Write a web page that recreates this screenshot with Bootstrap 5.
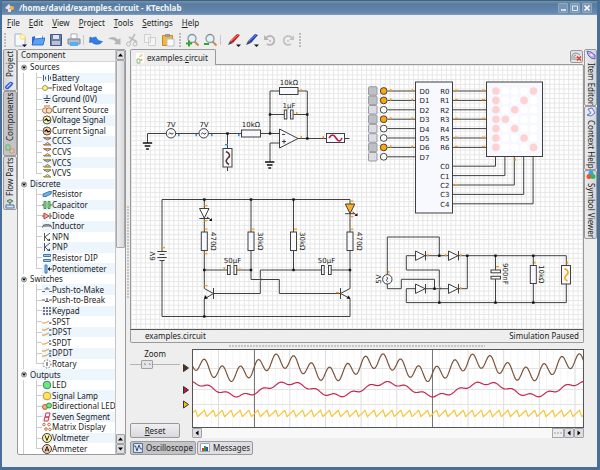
<!DOCTYPE html>
<html lang="en">
<head>
<meta charset="utf-8">
<meta name="viewport" content="width=device-width, initial-scale=1">
<title>/home/david/examples.circuit - KTechlab</title>
<link rel="stylesheet" href="https://cdn.jsdelivr.net/npm/bootstrap@5.3.0/dist/css/bootstrap.min.css">
<style>
:root { --face:#eeeeee; --edge:#9a9a9c; --zebra:#edf5fd; --frame:#4a6f96; }
body { font-family:"Noto Sans","DejaVu Sans",sans-serif; font-size:8px; line-height:10px; color:#222; background:var(--face); }
button { font:inherit; color:inherit; padding:0; border:0; background:none; }
u { text-underline-offset:1px; }
svg { display:block; flex:none; }
.app { height:100vh; border:solid var(--frame); border-width:0 3px 3px 2px; overflow:hidden; }
.titlebar { height:15px; color:#f2f6fa; font-weight:700; background:linear-gradient(#45607d 0 1px,#7393b2 1px,#587c9f 4px,#6488b0 13px,#84a0bd 15px); margin:0 -3px 0 -2px; }
.winbtns { gap:2px; }
.winbtn { width:10px; height:10px; background:#7795b4; border:1px solid #8fa9c2; border-radius:1px; }
.menus { height:15px; }
.menuitem { padding:0 4px 0 5px; }
.tools { height:19px; }
.tool { width:18px; height:18px; }
.grip { background:radial-gradient(circle at 1px 1px,#bdbdbd 1px,transparent 1px) 2px 0/3px 3px repeat-y; height:14px; }
.sep { height:10px; border-left:1px solid #c8c8c8; }
.work { min-height:0; }
.bottomgap { height:12px; }
.sidetabs { width:15px; padding-left:1px; }
.sidetabs.end { width:13px; padding-left:0; }
.vtab { writing-mode:vertical-rl; white-space:nowrap; border:1px solid var(--edge); background:linear-gradient(90deg,#ececee,#d6d6da); border-radius:2px; gap:3px; }
.sidetabs:not(.end) .vtab { transform:rotate(180deg); }
.vtab.on, .ftab.on { background:#c4c4c8; }
.panel { width:109px; background:#fff; border:1px solid var(--edge); border-radius:2px; overflow:hidden; }
.heading { height:12px; background:#f0f0f0; border-bottom:1px solid #d5d5d5; padding-left:3px; }
.tree li { flex:1 1 0; min-height:0; white-space:nowrap; }
.trunk { flex:none; width:6px; border-right:1px solid #ccc; }
.gap12 { flex:none; width:12px; }
.branch { flex:none; width:6px; background:linear-gradient(#ccc,#ccc) 0 0/1px 100% no-repeat,linear-gradient(#ccc,#ccc) 0 50%/100% 1px no-repeat; }
.branch.end { background-size:1px 50%,100% 1px; }
.leaf { min-width:0; }
.odd { background:var(--zebra); }
.vscroll { width:10px; background:#f7f7f7; border-left:1px solid #c5c5c8; }
.sbtn { width:10px; height:10px; border:1px solid #a2a2a6; background:#dedee2; border-radius:1px; margin:0; }
.vscroll .sbtn { width:9px; }
.thumb { border:1px solid #a8a8ac; background:linear-gradient(90deg,#eee,#d9d9dd); border-radius:1px; }
.dots { background:radial-gradient(circle at 1px 1px,#c6c6c6 1px,transparent 1px) 0 0/3px 3px; }
.vsplit { width:4px; }
.vsplit i { width:3px; height:92px; }
.hsplit { height:6px; }
.hsplit i { height:3px; width:256px; }
.doctabs { height:16px; padding:0 1px 0 0; }
.doctab { height:16px; border:1px solid var(--edge); border-bottom:0; border-radius:2px 2px 0 0; padding:0 7px 0 4px; gap:2px; }
.tabline { border-bottom:1px solid var(--edge); }
.closetab { width:13px; height:13px; border:1px solid var(--edge); border-radius:2px; background:#e2e2e4; }
.canvas { min-height:0; background:#fff; border-left:1px solid var(--edge); border-right:1px solid var(--edge); overflow:hidden; }
.docstatus { height:14px; border:1px solid var(--edge); border-top-color:#555; border-radius:0 0 2px 2px; padding:0 4px 0 14px; }
.scope { height:89px; }
.scopeside { width:50px; }
.marks { width:12px; }
.plot { background:#fff; border:1px solid #555; overflow:hidden; height:79px; }
.hscroll { height:10px; background:#f8f8f8; }
.hthumb { width:12px; height:10px; border:1px solid #a8a8ac; background:#ececee; }
.zoomer { appearance:none; -webkit-appearance:none; height:10px; width:50px; background:linear-gradient(#b4b4b4,#b4b4b4) 0 50%/100% 1px no-repeat,linear-gradient(#ddd,#ddd) 0 60%/100% 1px no-repeat; }
.zoomer::-webkit-slider-thumb { -webkit-appearance:none; width:12px; height:9px; border:1px solid #a0a0a4; border-radius:1px; background:radial-gradient(circle,#aaa 1px,#e4e4e8 1px) 0 0/5px 7px; }
.reset { height:15px; border:1px solid #98989c; border-radius:2px; background:linear-gradient(#f0f0f3,#d9d9dd); }
.footer-tabs { padding-top:3px; gap:1px; }
.ftab { height:14px; border:1px solid var(--edge); border-radius:2px; background:#dfdfe3; padding:0 2px; gap:3px; }
.wire { fill:none; stroke:#3f3f3f; stroke-width:1; }
.body { fill:#f8f8ff; stroke:#3f3f3f; stroke-width:1; }
.cirtext text { font-family:"DejaVu Sans",sans-serif; font-size:7px; fill:#222; }
</style>
</head>
<body>
<div class="app d-flex flex-column">
  <header class="titlebar d-flex align-items-center flex-shrink-0 px-1">
    <svg width="11" height="10" viewBox="0 0 11 10"><path d="M1 5 5 1l2 3-3 3z" fill="#dfe6ea"/><circle cx="8" cy="5" r="2" fill="#f4b54a"/><path d="M3 6h4v3H4z" fill="#e8e2d8"/><circle cx="3" cy="7" r="1" fill="#d46"/></svg>
    <span class="ms-1 flex-grow-1 text-nowrap">/home/david/examples.circuit - KTechlab</span>
    <div class="d-flex pe-1 winbtns">
      <button class="winbtn" aria-label="Minimize"><svg width="8" height="8"><path d="M2 6h5" stroke="#fff" stroke-width="1.4"/></svg></button>
      <button class="winbtn" aria-label="Maximize"><svg width="8" height="8"><path d="M1.500 2h5v4.500h-5z" fill="none" stroke="#e6edf4"/></svg></button>
      <button class="winbtn" aria-label="Close"><svg width="8" height="8"><path d="M1.500 1.500l5 5m0-5l-5 5" stroke="#fff" stroke-width="1.600"/></svg></button>
    </div>
  </header>
  <nav class="menus d-flex align-items-center flex-shrink-0" id="menus"></nav>
  <div class="tools d-flex align-items-center flex-shrink-0" id="tools" role="toolbar"></div>
  <main class="work d-flex flex-grow-1">
    <div class="sidetabs d-flex flex-column flex-shrink-0">
      <button class="vtab d-flex align-items-center justify-content-center" style="height:42px"><svg width="10" height="10" viewBox="0 0 10 10"><path d="M7.500 1 3 5.500a1.500 1.500 0 0 0 2 2L9 3.500A1 1 0 0 0 7 2L2 7" fill="none" stroke="#2d5fd0" stroke-width="1.300"/></svg>Project</button>
      <button class="vtab on d-flex align-items-center justify-content-center" style="height:65px"><svg width="10" height="10" viewBox="0 0 10 10"><path d="M1 1h4v4H1z" fill="#f0c0a0" stroke="#c98"/><path d="M5 4h4v5H5z" fill="#9ed8a8" stroke="#7a7"/></svg>Components</button>
      <button class="vtab d-flex align-items-center justify-content-center" style="height:54px"><svg width="10" height="10" viewBox="0 0 10 10"><path d="M1 1h8v3H1z" fill="#cfe2fa" stroke="#579"/><path d="M5 4v2M2 8l3-2 3 2-3 1.500z" fill="#9ed8a8" stroke="#575"/></svg>Flow Parts</button>
    </div>
    <section class="panel d-flex flex-shrink-0">
      <div class="d-flex flex-column flex-grow-1" style="min-width:0">
        <div class="heading flex-shrink-0">Component</div>
        <ul class="tree list-unstyled m-0 d-flex flex-column flex-grow-1" id="tree"></ul>
      </div>
      <div class="vscroll d-flex flex-column flex-shrink-0">
        <button class="sbtn" aria-label="Up"><svg width="7" height="8"><path d="M1 5.500h5L3.500 2.500z"/></svg></button>
        <div class="thumb" style="flex:186"></div><div style="flex:187"></div>
        <button class="sbtn" aria-label="Up"><svg width="7" height="8"><path d="M1 5.500h5L3.500 2.500z"/></svg></button>
        <button class="sbtn" aria-label="Down"><svg width="7" height="8"><path d="M1 2.500h5L3.500 5.500z"/></svg></button>
      </div>
    </section>
    <div class="vsplit d-flex align-items-center justify-content-center flex-shrink-0"><i class="dots"></i></div>
    <section class="d-flex flex-column flex-grow-1" style="min-width:0">
      <div class="doctabs d-flex flex-shrink-0">
        <button class="doctab d-flex align-items-center"><svg width="10" height="12" viewBox="0 0 10 12"><path d="M1 1h8v10H1z" fill="#fff"/><path d="M2 7h3v4H2z" fill="none" stroke="#7cbf7c"/><path d="M4 5q1-3 4-3l-2 3z" fill="#f6c766"/><circle cx="6.500" cy="8" r="1" fill="#e98"/></svg><span>examples.<u>c</u>ircuit</span></button>
        <div class="tabline flex-grow-1 d-flex justify-content-end align-items-center"><button class="closetab" aria-label="Close tab"><svg width="11" height="11"><path d="M1 9V5q0-2 3-3 3 0 5 2M3 9V5l2-1M5 9V6" fill="none" stroke="#8b94a0"/><path d="M6 5.500l4 4m0-4l-4 4" stroke="#e43c2c" stroke-width="1.600"/></svg></button></div>
      </div>
      <div class="canvas flex-grow-1"><svg id="circuit" width="100%" height="100%" role="img" aria-label="Circuit"></svg></div>
      <div class="docstatus d-flex align-items-center justify-content-between flex-shrink-0"><span>examples.circuit</span><span>Simulation Paused</span></div>
      <div class="hsplit d-flex align-items-center justify-content-center flex-shrink-0"><i class="dots"></i></div>
      <div class="scope d-flex flex-shrink-0">
        <div class="scopeside d-flex flex-column">
          <label for="zoom" class="text-center">Zoom</label>
          <input id="zoom" class="zoomer p-0" type="range" min="0" max="100" value="30">
          <button class="reset mt-auto w-100"><u>R</u>eset</button>
        </div>
        <svg class="marks" width="12" height="79"><g stroke="#333"><path d="M3.500 15.500v7l5-3.500z" fill="#5a2f12"/><path d="M3.500 37.500v7l5-3.500z" fill="#c8103c"/><path d="M3.500 52v7l5-3.500z" fill="#f5c400"/></g></svg>
        <div class="d-flex flex-column flex-grow-1" style="min-width:0">
          <div class="plot"><svg id="waves" width="100%" height="77" role="img" aria-label="Signals"></svg></div>
          <div class="hscroll d-flex">
            <button class="sbtn me-auto" aria-label="Left"><svg width="8" height="8"><path d="M5.500 1.500v5L2.500 4z"/></svg></button>
            <div class="hthumb d-flex align-items-center justify-content-center"><i class="dots" style="width:9px;height:3px"></i></div>
            <button class="sbtn" aria-label="Left"><svg width="8" height="8"><path d="M5.500 1.500v5L2.500 4z"/></svg></button>
            <button class="sbtn" aria-label="Right"><svg width="8" height="8"><path d="M2.500 1.500v5L5.500 4z"/></svg></button>
          </div>
        </div>
      </div>
      <div class="d-flex flex-shrink-0 footer-tabs">
        <button class="ftab on d-flex align-items-center"><svg width="10" height="10"><path d="M.5.5h9v9h-9z" fill="#dce6f4" stroke="#5a7292"/><path d="M1 3h1.500l1.500 5L6 2l1.500 4H9" fill="none" stroke="#35527a"/></svg>Oscilloscope</button>
        <button class="ftab d-flex align-items-center"><svg width="10" height="10"><path d="M.5.500h9v8h-9z" fill="#fff" stroke="#9ab"/><path d="M2 5h2v3H2z" fill="#e33"/><path d="M4 3h2v5H4z" fill="#26a326"/><path d="M6 4h2v4H6z" fill="#25c"/></svg>Messages</button>
      </div>
    </section>
    <div class="sidetabs end d-flex flex-column flex-shrink-0">
      <button class="vtab d-flex align-items-center justify-content-center" style="height:57px"><svg width="10" height="10"><path d="M1 1l4 1 4 3v4L5 8 2 5z" fill="#b9b4ea" stroke="#6a64b8"/><path d="M4 4l2 0 1 2-2 0z" fill="#eef"/></svg>Item Editor</button>
      <button class="vtab d-flex align-items-center justify-content-center" style="height:64px"><svg width="10" height="10"><path d="M2 2l4-1 3 5-4 3-4-1 4-2z" fill="#e4ecff" stroke="#5c78cc"/></svg>Context Help</button>
      <button class="vtab d-flex align-items-center justify-content-center" style="height:69px"><svg width="10" height="10"><circle cx="5" cy="3" r="2.500" fill="#2fa8e8"/><circle cx="3" cy="6.500" r="2.500" fill="#ee5522"/><circle cx="7" cy="6.500" r="2.500" fill="#35b558"/></svg>Symbol Viewer</button>
    </div>
  </main>
  <div class="bottomgap flex-shrink-0"></div>
</div>
<script>
const $ = id => document.getElementById(id);

// Menu bar: the first letter is the access key
$('menus').innerHTML = ['File','Edit','View','Project','Tools','Settings','Help']
  .map(m => `<button class="menuitem"><u>${m[0]}</u>${m.slice(1)}</button>`).join('');

// Toolbar glyphs on a 14 x 14 box
const lens = (mark, c) => `<path d="M8.500 8.500l4 4" stroke="#c98a4a" stroke-width="2"/><circle cx="6" cy="5.500" r="4" fill="#e4f1f8" stroke="#8a969e" stroke-width="1.300"/><path d="${mark}" stroke="${c}" stroke-width="2"/>`;
const drop = '<path d="M9 11.500h5L11.500 14z" fill="#111"/>';
const pen = (a, b) => `<path d="M1 12l2-4 3 2z" fill="#444"/><path d="M3 8L10 1l3 1-7 8z" fill="${a}"/><path d="M4 8l7-6" stroke="${b}"/>${drop}`;
const tools = [
 'g9', ['New','<path d="M2 1h7l3 3v9H2z" fill="#f6f8ff" stroke="#a9b0c4"/><circle cx="9.500" cy="4" r="3" fill="#ffe680"/><circle cx="9.500" cy="4" r="1.300" fill="#fff"/>'+drop],
 ['Open','<path d="M1 4l3-1 2 1 5-2 1 3v6H1z" fill="#2b6fd6"/><path d="M4 3l7-1v4H4z" fill="#f6fbff"/><path d="M3 6l11-1-2 7H1z" fill="#5ba2f2" stroke="#1d5fc4" stroke-width=".8"/>'],
 ['Save','<path d="M1.500 1.500h11v11h-11z" fill="#6b7ea8" stroke="#46567c"/><path d="M4 2h6v4H4z" fill="#dfe5f0"/><path d="M3 8h8v4H3z" fill="#b8c2d6"/>'],
 ['Print','<path d="M4 1h6v5H4z" fill="#fff" stroke="#aab"/><path d="M1 6h12v5H1z" fill="#b5bcc8" stroke="#7f8898"/><path d="M3 9h8v4H3z" fill="#58aef0"/>'],
 's4', ['Undo','<path d="M1 4l2 1 4-1Q8 8 13.500 8.500 11 12 6 11 3.500 10.500 3 9L.5 9.500z" fill="#2f7fe6" stroke="#1a5cc0" stroke-width=".6"/>'],
 ['Redo','<path d="M13.500 5v6.500L7 11l2-2Q7 6 1 6q5-4 10 .500z" fill="#b4b4b4"/>'],
 ['Cut','<path d="M10 1L5 9M4 4l8 5" stroke="#bbb" stroke-width="1.500"/><circle cx="3.500" cy="11" r="2" fill="none" stroke="#bbb"/><circle cx="10" cy="11" r="2" fill="none" stroke="#bbb"/>'],
 ['Copy','<path d="M1.500 1.500h6v8h-6zM5.500 4.500h7v8h-7z" fill="#f4f4f4" stroke="#d0d0d0"/>'],
 ['Paste','<path d="M1.500 2.500h10v10h-10z" fill="#f0b93c" stroke="#c48a1a"/><path d="M4 1h5v3H4z" fill="#999"/><path d="M6 6h7v7H6z" fill="#fafcff" stroke="#bbc"/>'],
 'g7', ['Zoom in', lens('M0 10.500h6M3 7.500v6','#2faa2f')],
 ['Zoom out', lens('M0 11h5','#2faa2f')],
 's5', ['Pen', pen('#c81e1e','#f08080')],
 ['Tool', pen('#1c3fae','#7c96e8')],
 ['Rotate left','<path d="M3 5a4.500 4.500 0 1 1 1 6" fill="none" stroke="#b5b5b5" stroke-width="1.800"/><path d="M1 2v5h5z" fill="#b5b5b5"/><circle cx="7" cy="8" r="1" fill="#b5b5b5"/>'],
 ['Rotate right','<path d="M11 5a4.500 4.500 0 1 0-1 6" fill="none" stroke="#c3c3c3" stroke-width="1.800"/><path d="M13 2v5H8z" fill="#c3c3c3"/><circle cx="7" cy="8" r="1" fill="#c3c3c3"/>'],
 'g7'];
$('tools').innerHTML = tools.map(t => typeof t === 'string'
  ? `<i class="${t[0]==='g'?'grip':'sep'} flex-shrink-0" style="width:${t.slice(1)}px"></i>`
  : `<button class="tool d-flex align-items-center justify-content-center" aria-label="${t[0]}"><svg width="14" height="14">${t[1]}</svg></button>`).join('');

// Component tree
const ctl = (a, b) => `<path d="M2 2h7L5.500 4zM2 9h7L5.500 6.500z" fill="${b}" stroke="#555" stroke-width=".8"/><path d="M1 1.500h8M1 8.500h8" stroke="${a}"/>`;
const sig = c => `<circle cx="5" cy="5" r="4" fill="${c}" stroke="#555"/><path d="M2.500 5.500l2-1.500 1.500 2 2-1" fill="none" stroke="#111" stroke-width="1.300"/>`;
const npn = '<path d="M2.500 1v8M3 5l5-4M3 5l3 3" fill="none" stroke="#555"/><path d="M5 8.500l3-2V9z" fill="#333"/>';
const sw = n => `<path d="M0 ${n}h3l4-2M8 ${n}h2" stroke="#e0952c" fill="none"/><circle cx="8" cy="${n}" r="1" fill="#3b7fd0"/>`;
const meter = (c, t) => `<circle cx="5" cy="5" r="4.500" fill="${c}" stroke="#444"/><path d="${t}" fill="none" stroke="#222"/>`;
const groups = [
 ['Sources', [
  ['Battery','<path d="M1.500 2v6M3.500 3.500v3M6.500 2v6M8.500 3.500v3" stroke="#445a7a"/>'],
  ['Fixed Voltage','<circle cx="3" cy="5" r="2.500" fill="#fff2a0" stroke="#a8963a"/><path d="M6 5h4" stroke="#555"/>'],
  ['Ground (0V)','<path d="M5 1v3M1.500 4.500h7M2.500 6.500h5M4 8.500h2" stroke="#445"/>'],
  ['Current Source','<circle cx="3.200" cy="5.500" r="2.700" fill="#fde0c8" stroke="#b86a3c"/><circle cx="7" cy="5.500" r="2.700" fill="#fde0c8" stroke="#b86a3c"/><path d="M2 1h6" stroke="#b86a3c"/>'],
  ['Voltage Signal',sig('#fff4a0')], ['Current Signal',sig('#fbc9a0')],
  ['CCCS',ctl('#c87a3c','#fbd6b8')], ['CCVS',ctl('#c87a3c','#fdf0a0')], ['VCCS',ctl('#b0a030','#fbd6b8')], ['VCVS',ctl('#b0a030','#fdf0a0')]]],
 ['Discrete', [
  ['Resistor','<path d="M1 5l6-2.500h2.500L9 5 4 7.500H1z" fill="#6aaef0" stroke="#2e68a8" stroke-width=".8"/>'],
  ['Capacitor','<path d="M2 1.500h2v7H2zM6 1.500h2v7H6z" fill="#a8e0a0" stroke="#3f9440"/><path d="M0 5h2M8 5h2" stroke="#555"/>'],
  ['Diode','<path d="M2 2l5 3-5 3z" fill="#f4a8a8" stroke="#c23a3a"/><path d="M8 2v6M0 5h2M8 5h2" stroke="#555"/>'],
  ['Inductor','<path d="M0 6h1q0-3 2-2 1-1 2 0 1-1 2 0 2-1 2 2h1M3 4v2M5 4v2M7 4v2" fill="none" stroke="#556"/>'],
  ['NPN',npn], ['PNP',npn],
  ['Resistor DIP','<path d="M1.500 1.500h7v2h-7zM1.500 6.500h7v2h-7z" fill="#9fcbf6" stroke="#3f76b0"/>'],
  ['Potentiometer','<path d="M3 1h2v8H3z" fill="#9fcbf6" stroke="#3f76b0"/><path d="M10 5H7M7.500 3.500v3L6 5z" stroke="#334"/>']]],
 ['Switches', [
  ['Push-to-Make','<path d="M0 6.500h3M7 6.500h3M2.500 4h5M5 4V2" stroke="#667"/>'],
  ['Push-to-Break','<path d="M0 5h3M7 5h3M3 6.500h4M5 6V3" stroke="#556" stroke-width="1.200"/>'],
  ['Keypad','<path d="M1 1h2v2H1zM4 1h2v2H4zM7 1h2v2H7zM1 4h2v2H1zM4 4h2v2H4zM7 4h2v2H7zM1 7h2v2H1zM4 7h2v2H4zM7 7h2v2H7z" fill="#778"/>'],
  ['SPST',sw(6)], ['DPST',sw(3)+sw(8)], ['SPDT',sw(6)+'<circle cx="8" cy="3" r="1" fill="#3b7fd0"/>'], ['DPDT',sw(3)+sw(8)+'<circle cx="8" cy="5.500" r="1" fill="#3b7fd0"/>'],
  ['Rotary','<circle cx="5" cy="5" r="4" fill="none" stroke="#555" stroke-dasharray="1.500 1.500"/><path d="M5 3v4" stroke="#333"/>']]],
 ['Outputs', [
  ['LED','<circle cx="5" cy="5" r="3.800" fill="#6be68a" stroke="#3a8a4c"/>'],
  ['Signal Lamp','<circle cx="5" cy="5" r="3.800" fill="#ffe55a" stroke="#c8962a"/>'],
  ['Bidirectional LED','<circle cx="3" cy="6" r="2.500" fill="#f6b27a" stroke="#9a6a3a"/><circle cx="7" cy="4.500" r="2.500" fill="#6be68a" stroke="#3a8a4c"/>'],
  ['Seven Segment','<path d="M4 1h4L7 5H3zM3 5h4L6 9H2z" fill="none" stroke="#cc3a4a"/>'],
  ['Matrix Display','<g fill="#fff0dc" stroke="#b8794a"><circle cx="2" cy="2.500" r="1.300"/><circle cx="7" cy="2.500" r="1.300"/><circle cx="4" cy="7" r="1.300"/><circle cx="8" cy="7.500" r="1.300"/></g>'],
  ['Voltmeter',meter('#fff6a0','M3 2.500l2 5 2-5')], ['Ammeter',meter('#fbd3ae','M3 7.500l2-5 2 5M3.500 6h3')]]]];
let n = 0, html = '';
for (const [g, items] of groups) {
  html += `<li class="d-flex align-items-stretch"><svg width="12" height="11" viewBox="0 0 12 11"><circle cx="6" cy="5.500" r="2.500" fill="#eee" stroke="#888"/><path d="M4 4.500h4L6 7z"/></svg><span class="flex-grow-1 d-flex align-items-center ${n++ % 2 ? 'odd' : ''}">${g}</span></li>`;
  items.forEach(([t, i], k) => {
    html += `<li class="d-flex align-items-stretch"><span class="trunk"></span><span class="gap12"></span><span class="branch ${k === items.length - 1 ? 'end' : ''}"></span><span class="leaf flex-grow-1 d-flex align-items-center ${n++ % 2 ? 'odd' : ''}"><svg width="10" height="10">${i}</svg>${t}</span></li>`;
  });
}
$('tree').innerHTML = html;

// Circuit drawing
const W = d => `<path class="wire" d="${d}"/>`;
const box = (x, y, w, h) => `<rect class="body" x="${x}" y="${y}" width="${w}" height="${h}"/>`;
const node = (...p) => p.map(([x, y]) => `<rect x="${x-1.2}" y="${y-1.2}" width="2.400" height="2.400" fill="#111"/>`).join('');
const src = (x, y, r = 0) => `<g transform="translate(${x} ${y}) rotate(${r})"><circle class="body" r="4.700"/><path class="wire" d="M-2.500 .8q1.200-2 2.500-.5t2.500-.8"/></g>`;
const gnd = (x, y) => `<path d="M${x-4.7} ${y}h9.400M${x-2.8} ${y+3}h5.600M${x-1.4} ${y+6}h2.800" stroke="#111" stroke-width="1.500"/>`;
const tick = (c, ...p) => p.map(([x, y, v]) => `<rect x="${x}" y="${y}" width="${v ? 3 : 1.500}" height="${v ? 1.300 : 2.200}" fill="${c}"/>`).join('');
const T = (x, y, t, a = 'middle') => `<text x="${x}" y="${y}" text-anchor="${a}">${t}</text>`;
const R = (x, y, t, a = 90) => `<text transform="translate(${x} ${y}) rotate(${a})" ${a < 0 ? 'text-anchor="middle"' : ''}>${t}</text>`;
const or = '#ff9d0a', bl = '#1e90ff';
let s = '';
// amplifier
s += W('M147.500 143v-9.500H241.500M260.500 133.500H279.500M270 133.500V91H307.300V138.500M270 114.500H284M293.500 114.500H307.300M298 138.500H326.500M344.500 138.500H349.500M279.500 143H270V162M227.500 133.500V148M227.500 167v4');
s += gnd(147.5, 143) + gnd(269.7, 162) + src(171, 133.3) + src(203.7, 133.3);
s += box(241.5, 130, 19, 7) + box(279.5, 87.5, 18.5, 7) + box(284.3, 110, 2.5, 9) + box(290.6, 110, 2.500, 9);
s += '<path class="body" d="M279.500 129v19l18.500-9.500z"/><path class="wire" d="M282 134.500h3M282 141.500h4M284 139.500v4"/>';
s += box(326.5, 133.5, 18, 9) + '<path d="M329 138q3.500-6 7 0t6 0" fill="none" stroke="#c0143c" stroke-width="1.500"/>';
s += box(223, 148.500, 9, 18.500) + '<path d="M226 151.500q6 3 2 6.500t1 6.500" fill="none" stroke="#5a2f1a" stroke-width="1.500"/>';
s += node([227.5,133.5],[270,133.5],[270,114.5],[307.3,114.5],[307.3,138.5]);
s += tick(bl,[178,134],[195.500,134],[211,134],[238,134],[225,144,1]) + tick(or,[300.500,89],[296,112],[300.500,136],[322.500,136]);
s += T(171,127,'7V') + T(204,127,'7V') + T(251,127,'10kΩ') + T(289,85,'10kΩ') + T(289,108,'1µF');
// display driver
const on = [1,1,0,1,0,0,1,0], rOn = [1,1,0,1,0,1,1], col = [4,3,2,1,2,3,4];
s += box(415.5, 82, 37, 131) + box(486.5, 82, 56, 74.5);
for (let i = 0; i < 8; i++) {
  const y = 91 + 9.4 * i;
  s += W(`M387.500 ${y}H415.500`) + `<rect x="368.500" y="${y-4.3}" width="8.500" height="8.500" rx="1" fill="${on[i] ? '#bfc0c6' : '#dcdce4'}" stroke="#9a9aa0"/><circle cx="383.700" cy="${y}" r="3.400" fill="${on[i] ? '#ffa50a' : '#fff'}" stroke="#444"/>`;
  if (on[i]) s += tick(or,[390,y-2],[411.500,y-2]);
  s += T(419.5, y+3, 'D'+i, 'start');
  if (i < 7) {
    s += W(`M452.500 ${y}H486.500`) + T(449.5, y+3, 'R'+i, 'end');
    if (rOn[i]) s += tick(or,[455,y-1.5,1],[482,y-1.5,1]);
    for (let c = 0; c < 5; c++) s += `<circle cx="${495.900+9.4*c}" cy="${y}" r="3.800" fill="${c === 0 || c === col[i] ? '#fcd2d2' : '#fff'}"/>`;
  }
}
for (let i = 0; i < 5; i++) { const y = 166.2 + 9.4 * i; s += W(`M452.500 ${y}H${495.500+9.4*i}V156.500`) + T(449.5, y+3, 'C'+i, 'end'); }
s += tick(or,[455,184,1],[514.500,158.500]);
// multivibrator
s += W('M162 251.500V199.500H350V204M162 260.500V316.500H350V298.500M204.300 199.500V288.500L213.500 293.500H260.300V281.500q2-2 0-4V270H321M213.500 293.500L204.300 299V316.500M251 199.500V279.500H279.300V293.500H340.500L350 288.500V213M340.500 293.500L350 298.500M293.500 199.500V270M204.300 270H227M237 270H251M331 270H350M213.500 288v11M340.500 288v11');
s += W('M157.300 251.500h9.400M159.500 254.500h5M157.300 257.500h9.400M159.500 260.500h5');
for (const x of [204.3, 251, 293.5, 350]) s += box(x-3, 232, 6, 18.5);
for (const x of [227.5, 234, 321.5, 328.5]) s += box(x, 265.5, 2.700, 9);
s += '<path d="M199.500 208.500h9.500l-4.700 9.500z" fill="#fff" stroke="#3f3f3f"/><path d="M345.300 204h9.500l-4.700 9.500z" fill="#ffb020" stroke="#3f3f3f"/>';
s += W('M199.300 218.500h10M345 213.700h10M207 217l4 3M352.500 212l4 3') + '<path d="M209 221l3-3v3zM354.500 216l3-3v3zM204 299l1-4 3 3.500zM350.300 299l-4-.5 2.500-3z" fill="#111"/>';
s += node([204.3,199.5],[251,199.5],[293.5,199.5],[204.3,270],[251,270],[293.5,270],[350,270],[204.3,316.5]);
s += tick(or,[162,247,1],[204.500,205,1],[204.500,220,1],[204.500,228.500,1],[204.500,253,1],[204.500,285,1],[251.500,228.500,1],[294,228.500,1],[350.500,200.500,1],[350.500,216,1],[350.500,228.500,1],[223.500,267],[238,268.500,1],[336,292,1]);
s += R(210.500,232,'470Ω') + R(257.500,232,'30kΩ') + R(300,232,'30kΩ') + R(356.500,232,'470Ω') + R(155,256,'6V',-90) + T(232.500,263,'50µF') + T(326.500,263,'50µF');
// rectifier
s += W('M387.300 274.500V237H439.300V255.700M387.300 284V288.700H401.300V279.300H434.500V288.700M415.500 255.700H406.300V270H439.300V286.500q2 2 0 4V302.600M425 255.700H448.500M458.500 255.700H566.300V265M415.500 288.700H406.300V302.600H566.300V284M425 288.700H448.500M458.500 288.700H467.300V255.700M495.500 255.700V270M495.500 279V302.600M533.300 255.700V302.600');
for (const [x, y] of [[415.5,255.7],[448.5,255.7],[415.5,288.7],[448.5,288.7]]) s += `<path class="body" d="M${x} ${y-4.7}v9.400l9.500-4.700zM${x+10} ${y-4.7}v9.400"/>`;
s += src(387.3, 279.3, 90) + box(491, 270, 9.500, 2.800) + box(491, 276.300, 9.500, 2.700) + box(530.300, 265.500, 6, 18) + box(561.500, 265.500, 9, 18.500) + '<path d="M564.500 268.500q6 3 2 6.500t1 6" fill="none" stroke="#f5a300" stroke-width="1.500"/>';
s += node([439.3,255.7],[467.3,255.7],[495.5,255.7],[533.3,255.7],[434.5,288.7],[439.3,302.6],[495.5,302.6],[533.3,302.6]);
s += tick(or,[388,271],[427,254],[445,254],[460,254],[460,287],[496,266,1],[534,261.500],[566.500,261.500]);
s += R(502.500,263,'900nF') + R(538.500,265,'10kΩ') + R(380.500,279,'5V',-90);
$('circuit').innerHTML = `<defs><pattern id="grid" width="4.700" height="4.700" patternUnits="userSpaceOnUse"><path d="M0 .5h4.700M.5 0v4.700" stroke="#e6e6e6"/></pattern></defs><rect width="100%" height="100%" fill="url(#grid)"/><g class="cirtext" transform="translate(-131 -65)">${s}</g>`;

// Oscilloscope traces, x and y in window units
const cosw = (x, p, w) => Math.cos(2 * Math.PI * (x - p) / w);
const trace = (f, c, step, sw) => { let d = ''; for (let x = 193; x < 1400; x += step) d += (d ? 'L' : 'M') + x.toFixed(1) + ' ' + f(x).toFixed(1); return `<path d="${d}" fill="none" stroke="${c}" stroke-width="${sw}"/>`; };
let g = '';
for (let i = -3; i < 170; i++) g += `<path d="M${218.500+7.13*i} 350v78" stroke="${i % 5 ? '#f5f5f5' : '#dcdcdc'}"/>`;
for (const y of [368.5, 389.5, 404.5]) g += `<path d="M193 ${y}H1400" stroke="#e4e4e4"/>`;
for (let x = 254.5; x < 1400; x += 178) g += `<path d="M${x} 350v78" stroke="#777"/>`;
g += trace(x => 367.6 - 6.7*cosw(x,281,98.5) - 7.2*cosw(x,276,17.85), '#7a5238', .5, 1.2);
g += trace(x => 389.3 - 6.2*cosw(x,288.5,98.2) - 1.6*cosw(x,280.5,17.85), '#c8284f', .5, 1.2);
g += trace(x => { const p = ((x - 195.5) / 8.93 % 1 + 1) % 1; return p < .25 ? 410.2 + p*26 : 416.7 - (p-.25)*8.7; }, '#f7c433', .5, 1.2);
$('waves').innerHTML = `<g transform="translate(-193 -350)">${g}</g>`;
</script>
<script src="https://cdn.jsdelivr.net/npm/bootstrap@5.3.0/dist/js/bootstrap.bundle.min.js"></script>
</body>
</html>
